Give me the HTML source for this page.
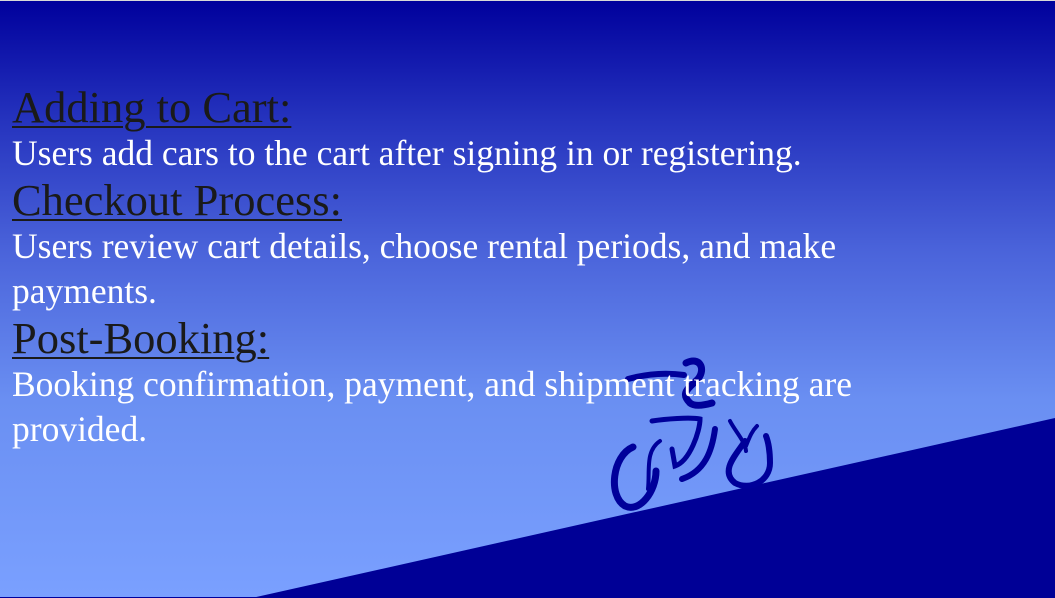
<!DOCTYPE html>
<html><head><meta charset="utf-8"><style>
html,body{margin:0;padding:0}
body{width:1055px;height:597px;overflow:hidden;position:relative;font-family:"Liberation Serif",serif;
background:linear-gradient(to bottom,#00009c 0px,#2533be 120px,#4a63da 250px,#6a8ff2 400px,#7aa0ff 597px);border-top:1px solid #d8d8d8;box-sizing:border-box}
svg{position:absolute;left:0;top:0}
.c{position:absolute;left:12px;top:82px;width:870px}
h2{font-weight:normal;font-size:44.5px;color:#1a1a1a;text-decoration:underline;text-decoration-thickness:2px;text-underline-offset:4px;margin:0;line-height:48px}
p{margin:0;color:#fff;font-size:35.5px;line-height:45px}
</style></head><body>
<svg width="1055" height="597">
<polygon points="252,597 1055,417 1055,597" fill="#000096"/>
<g fill="none" stroke="#00009a" stroke-linecap="round">
<path d="M633,446 C612,455 608,495 625,505 C640,512 656,490 656,470" stroke-width="7"/>
<path d="M660,440 C645,450 650,470 648,488" stroke-width="4"/>
<path d="M652,420 C665,418 690,416 700,418 C700,430 690,460 675,465 L672,448" stroke-width="5"/>
<path d="M715,428 C712,450 705,470 682,478" stroke-width="6"/>
<path d="M745,440 C735,455 720,470 735,482 C750,490 770,480 770,462 C770,450 768,440 766,435" stroke-width="6"/>
<path d="M730,420 C735,430 745,440 746,450 M746,445 C750,435 752,430 757,425" stroke-width="4"/>
<path d="M628,378 C650,372 670,372 684,374" stroke-width="6"/>
<path d="M686,362 C700,355 706,368 698,378 C688,388 680,392 690,402 C695,406 705,404 712,402" stroke-width="7"/>
</g>
</svg>
<div class="c">
<h2>Adding to Cart:</h2>
<p>Users add cars to the cart after signing in or registering.</p>
<h2>Checkout Process:</h2>
<p>Users review cart details, choose rental periods, and make payments.</p>
<h2>Post-Booking:</h2>
<p>Booking confirmation, payment, and shipment tracking are provided.</p>
</div>
</body></html>
